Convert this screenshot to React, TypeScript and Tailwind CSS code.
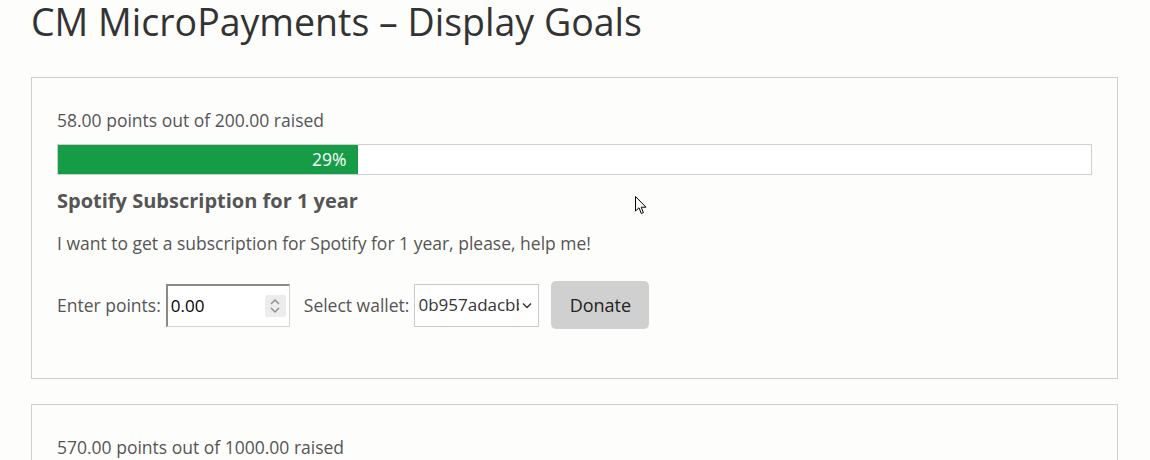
import React from 'react';

interface Goal {
  raised: number;
  target: number;
  title: string;
  description: string;
}

const goals: Goal[] = [
  {
    raised: 58,
    target: 200,
    title: 'Spotify Subscription for 1 year',
    description: 'I want to get a subscription for Spotify for 1 year, please, help me!',
  },
  {
    raised: 570,
    target: 1000,
    title: 'New laptop',
    description: 'Help me buy a new laptop.',
  },
];

const GoalCard: React.FC<{ goal: Goal }> = ({ goal }) => {
  const pct = Math.round((goal.raised / goal.target) * 100);

  return (
    <div className="border border-[#cfcfcf] bg-[#fdfdfc] pt-[30px] px-[25px] pb-[49px]">
      <p className="text-[17.5px] leading-[24px] text-[#555]">
        {goal.raised.toFixed(2)} points out of {goal.target.toFixed(2)} raised
      </p>
      <div className="mt-[12px] h-[31px] border border-[#cfcfcf] bg-white">
        <div
          className="h-full bg-[#169c46] text-white text-[17.5px] leading-[29px] text-right pr-[11px]"
          style={{ width: `${pct}%` }}
        >
          {pct}%
        </div>
      </div>
      <h3 className="mt-[12px] text-[20px] leading-[27px] font-bold text-[#555]">{goal.title}</h3>
      <p className="mt-[17px] text-[17.5px] leading-[24px] text-[#555]">{goal.description}</p>
      <div className="mt-[26px] flex items-center h-[48px] text-[17.5px] text-[#555]">
        <label className="mr-[5px]">Enter points:</label>
        <div className="relative w-[124px] h-[43px] border-t-2 border-l-2 border-b border-r border-t-[#8a8a8a] border-l-[#8a8a8a] border-b-[#d4d4d4] border-r-[#d4d4d4] bg-white">
          <input
            type="text"
            readOnly
            value="0.00"
            className="w-full h-full pl-[3px] pr-[30px] text-[17px] text-black bg-transparent outline-none"
          />
          <div className="absolute right-[3px] top-[9px] w-[21px] h-[22px] bg-[#ececec] rounded-[2px] flex flex-col items-center justify-center gap-[2px]">
            <svg width="10" height="6" viewBox="0 0 10 6" fill="none" stroke="#8a8a8a" strokeWidth="1.3">
              <path d="M1 5 L5 1 L9 5" />
            </svg>
            <svg width="10" height="6" viewBox="0 0 10 6" fill="none" stroke="#8a8a8a" strokeWidth="1.3">
              <path d="M1 1 L5 5 L9 1" />
            </svg>
          </div>
        </div>
        <label className="ml-[14px] mr-[5px]">Select wallet:</label>
        <div className="w-[125px] h-[43px] border border-[#c9c9c9] bg-white flex items-center pl-[3px] pr-[6px] overflow-hidden">
          <span className="flex-1 overflow-hidden whitespace-nowrap text-[17px] text-[#333]">0b957adacbb5</span>
          <svg width="10" height="7" viewBox="0 0 10 7" fill="none" stroke="#333" strokeWidth="1.4" className="ml-[3px] shrink-0">
            <path d="M1 1.5 L5 5.5 L9 1.5" />
          </svg>
        </div>
        <button className="ml-[12px] w-[98px] h-[48px] rounded-[5px] bg-[#d0d0d0] text-[18px] text-[#222]">
          Donate
        </button>
      </div>
    </div>
  );
};

export default function App() {
  return (
    <div
      className="relative h-[460px] bg-[#fdfdfc] pl-[31px] pr-[32px] overflow-hidden"
      style={{ fontFamily: '"Open Sans", "Noto Sans", sans-serif' }}
    >
      <h1 className="text-[37.5px] leading-[44px] text-[#333] pb-[33px]">
        CM MicroPayments – Display Goals
      </h1>
      <div className="flex flex-col gap-[25px]">
        {goals.map((g) => (
          <GoalCard key={g.title} goal={g} />
        ))}
      </div>
      <svg
        className="absolute left-[635px] top-[196px]"
        width="12"
        height="20"
        viewBox="0 0 12 20"
      >
        <path d="M0.5 0.5 L0.5 15 L4 11.8 L6.3 17.5 L8.4 16.6 L6.2 11.2 L11 11.2 Z" fill="#fff" stroke="#000" strokeWidth="1" />
      </svg>
    </div>
  );
}
